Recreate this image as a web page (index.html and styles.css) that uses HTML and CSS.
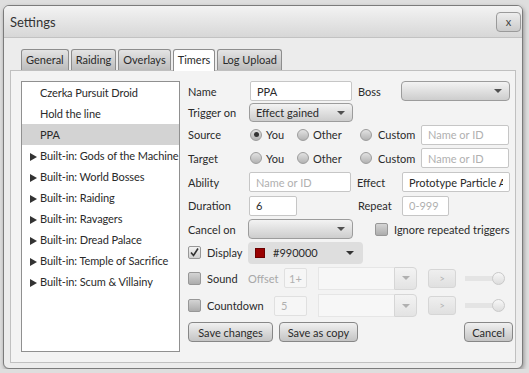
FILE: index.html
```html
<!DOCTYPE html>
<html lang="en">
<head>
    <meta charset="UTF-8">
    <meta name="viewport" content="width=device-width, initial-scale=1.0">
    <title>Settings</title>
    <link rel="stylesheet" href="styles.css">
</head>
<body>
<div class="window">
    <div class="titlebar">
        <span class="title">Settings</span>
        <button class="close">x</button>
    </div>
    <div class="content">
        <div class="tabs">
            <div class="tab">General</div>
            <div class="tab">Raiding</div>
            <div class="tab">Overlays</div>
            <div class="tab active">Timers</div>
            <div class="tab">Log Upload</div>
        </div>
        <div class="panel">
            <ul class="timer-list">
                <li>Czerka Pursuit Droid</li>
                <li>Hold the line</li>
                <li class="selected">PPA</li>
                <li class="group">Built-in: Gods of the Machine</li>
                <li class="group">Built-in: World Bosses</li>
                <li class="group">Built-in: Raiding</li>
                <li class="group">Built-in: Ravagers</li>
                <li class="group">Built-in: Dread Palace</li>
                <li class="group">Built-in: Temple of Sacrifice</li>
                <li class="group">Built-in: Scum &amp; Villainy</li>
            </ul>

            <div class="form">
                <div class="row row-name">
                    <span class="lbl">Name</span>
                    <input class="field name-field" type="text" value="PPA">
                    <span class="lbl-mid boss-lbl">Boss</span>
                    <div class="combo boss-combo"><span class="arrow"></span></div>
                </div>

                <div class="row row-trigger">
                    <span class="lbl">Trigger on</span>
                    <div class="combo trigger-combo">Effect gained<span class="arrow"></span></div>
                </div>

                <div class="row row-source">
                    <span class="lbl">Source</span>
                    <span class="radio-item you"><span class="radio on"></span>You</span>
                    <span class="radio-item other"><span class="radio"></span>Other</span>
                    <span class="radio-item custom"><span class="radio"></span>Custom</span>
                    <input class="field custom-field" type="text" placeholder="Name or ID">
                </div>

                <div class="row row-target">
                    <span class="lbl">Target</span>
                    <span class="radio-item you"><span class="radio"></span>You</span>
                    <span class="radio-item other"><span class="radio"></span>Other</span>
                    <span class="radio-item custom"><span class="radio"></span>Custom</span>
                    <input class="field custom-field" type="text" placeholder="Name or ID">
                </div>

                <div class="row row-ability">
                    <span class="lbl">Ability</span>
                    <input class="field ability-field" type="text" placeholder="Name or ID">
                    <span class="lbl-mid effect-lbl">Effect</span>
                    <input class="field effect-field" type="text" value="Prototype Particle Accelerator">
                </div>

                <div class="row row-duration">
                    <span class="lbl">Duration</span>
                    <input class="field duration-field" type="text" value="6">
                    <span class="lbl-mid repeat-lbl">Repeat</span>
                    <input class="field repeat-field" type="text" placeholder="0-999">
                </div>

                <div class="row row-cancel">
                    <span class="lbl">Cancel on</span>
                    <div class="combo cancel-combo"><span class="arrow"></span></div>
                    <span class="check ignore-check"></span>
                    <span class="check-text">Ignore repeated triggers</span>
                </div>

                <div class="row row-display">
                    <span class="check-label"><span class="check checked">
                        <svg width="11" height="11" viewBox="0 0 11 11"><path d="M2 5.5 L4.5 8.5 L9 1.5" fill="none" stroke="#333" stroke-width="1.6"/></svg>
                    </span>Display</span>
                    <div class="color-picker">
                        <span class="swatch"></span>
                        <span class="color-text">#990000</span>
                        <span class="arrow"></span>
                    </div>
                </div>

                <div class="row row-sound">
                    <span class="check-label"><span class="check"></span>Sound</span>
                    <span class="muted offset-lbl">Offset</span>
                    <input class="field offset-field" type="text" placeholder="1+" disabled>
                    <div class="combo-off"><span class="combo-off-text"></span><span class="combo-off-btn"><span class="arrow"></span></span></div>
                    <button class="play" disabled>&gt;</button>
                    <div class="slider"><span class="thumb"></span></div>
                </div>

                <div class="row row-countdown">
                    <span class="check-label countdown-label"><span class="check"></span>Countdown</span>
                    <input class="field countdown-field" type="text" placeholder="5" disabled>
                    <div class="combo-off"><span class="combo-off-text"></span><span class="combo-off-btn"><span class="arrow"></span></span></div>
                    <button class="play" disabled>&gt;</button>
                    <div class="slider"><span class="thumb"></span></div>
                </div>

                <div class="row row-buttons">
                    <button class="btn save-btn">Save changes</button>
                    <button class="btn copy-btn">Save as copy</button>
                    <button class="btn cancel-btn">Cancel</button>
                </div>
            </div>
        </div>
    </div>
</div>
</body>
</html>
```

FILE: styles.css
```css
body {
    margin: 0;
    background: #dedede;
    font-family: Lato, "Liberation Sans", sans-serif;
    font-size: 11px;
    color: #2a2a2a;
}
.window {
    margin: 5px 0 0 3px;
    width: 518px;
    height: 362px;
    border: 1px solid #7b7b7b;
    border-radius: 6px;
    background: #ececec;
    box-shadow: 1px 2px 4px rgba(0,0,0,0.35);
    overflow: hidden;
    display: flex;
    flex-direction: column;
}
.titlebar {
    height: 31px;
    border-bottom: 1px solid #c2c2c2;
    background: linear-gradient(#f3f3f3, #d7d7d7);
    display: flex;
    align-items: center;
    justify-content: space-between;
    padding: 0 1px 0 6px;
}
.title {
    font-size: 13px;
    color: #333;
}
.close {
    width: 25px;
    height: 20px;
    border: 1px solid #9a9a9a;
    border-radius: 4px;
    background: linear-gradient(#ededed, #cbcbcb);
    font-family: inherit;
    font-size: 11px;
    color: #444;
    padding: 0;
}
.content {
    flex: 1;
    padding: 11px 6px 5px;
    display: flex;
    flex-direction: column;
}
.tabs {
    display: flex;
    gap: 2px;
    margin-left: 11px;
    height: 21px;
}
.tab {
    border: 1px solid #8d8d8d;
    border-bottom: none;
    border-radius: 3px 3px 0 0;
    padding: 0 4px;
    line-height: 20px;
    background: linear-gradient(#e4e4e4, #bcbcbc);
}
.tab.active {
    background: #fff;
    height: 21px;
    margin-bottom: -1px;
    z-index: 1;
}
.panel {
    flex: 1;
    border: 1px solid #c0c0c0;
    background: #f3f3f3;
    display: flex;
    gap: 8px;
    padding: 10px 2px 10px 10px;
}
.timer-list {
    width: 159px;
    box-sizing: border-box;
    margin: 0;
    padding: 0;
    list-style: none;
    border: 1px solid #909090;
    background: #fff;
    letter-spacing: -0.1px;
}
.timer-list li {
    height: 21px;
    line-height: 21px;
    padding-left: 18px;
    white-space: nowrap;
    overflow: hidden;
}
.timer-list li.selected {
    background: #d3d3d3;
}
.timer-list li.group::before {
    content: "";
    display: inline-block;
    width: 0;
    height: 0;
    border-left: 7px solid #333;
    border-top: 4px solid transparent;
    border-bottom: 4px solid transparent;
    margin-left: -10px;
    margin-right: 3px;
    vertical-align: -1px;
}
.form {
    flex: 1;
    margin-top: -1px;
    display: flex;
    flex-direction: column;
}
.row {
    display: flex;
    align-items: center;
    flex-shrink: 0;
}
.row-name { height: 22px; }
.row-trigger { height: 21px; }
.row-source { height: 23px; }
.row-target { height: 24px; }
.row-ability { height: 24px; }
.row-duration { height: 23px; }
.row-cancel { height: 24px; }
.row-display { height: 23px; }
.row-sound { height: 28px; }
.row-countdown { height: 27px; }
.row-buttons { height: 26px; }

.lbl {
    width: 61px;
    flex-shrink: 0;
}
.lbl-mid {
    flex-shrink: 0;
    padding-left: 6px;
    box-sizing: border-box;
}
.boss-lbl { width: 49px; }
.effect-lbl { width: 51px; }
.repeat-lbl { width: 44px; margin-left: 61px; padding-left: 0; }

.field {
    box-sizing: border-box;
    height: 20px;
    border: 1px solid #c6c6c6;
    border-radius: 2px;
    background: #fff;
    font-family: inherit;
    font-size: 11px;
    color: #2a2a2a;
    padding: 0 6px;
    margin: 0;
    outline: none;
}
.field::placeholder { color: #b0b0b0; }
.field:disabled {
    background: #f6f6f6;
    border-color: #e0e0e0;
}
.name-field { width: 102px; margin-left: 1px; }
.custom-field { width: 88px; }
.ability-field { width: 102px; }
.effect-field { width: 108px; }
.duration-field { width: 48px; }
.repeat-field { width: 47px; }
.offset-field { width: 23px; padding: 0 4px; }
.countdown-field { width: 33px; }

.combo {
    box-sizing: border-box;
    height: 20px;
    border: 1px solid #9c9c9c;
    border-radius: 4px;
    background: linear-gradient(#f3f3f3, #cdcdcd);
    display: flex;
    align-items: center;
    padding-left: 6px;
}
.boss-combo { width: 109px; }
.trigger-combo { width: 104px; height: 19px; }
.cancel-combo { width: 105px; margin-left: -1px; }
.arrow {
    width: 0;
    height: 0;
    border-left: 4px solid transparent;
    border-right: 4px solid transparent;
    border-top: 4px solid #505050;
    margin-left: auto;
    margin-right: 7px;
}

.radio-item {
    display: flex;
    align-items: center;
    gap: 4px;
    flex-shrink: 0;
    box-sizing: border-box;
}
.radio-item.you { width: 49px; padding-left: 2px; margin-left: -1px; }
.radio-item.other { width: 63px; }
.radio-item.custom { width: 61px; gap: 6px; }
.radio {
    width: 12px;
    height: 12px;
    box-sizing: border-box;
    border-radius: 50%;
    border: 1px solid #9c9c9c;
    background: linear-gradient(#e2e2e2, #b3b3b3);
    display: flex;
    align-items: center;
    justify-content: center;
}
.radio.on::after {
    content: "";
    width: 5px;
    height: 5px;
    border-radius: 50%;
    background: #333;
}

.check {
    width: 13px;
    height: 13px;
    box-sizing: border-box;
    border: 1px solid #979797;
    border-radius: 2px;
    background: linear-gradient(#d4d4d4, #acacac);
    flex-shrink: 0;
    display: flex;
    align-items: center;
    justify-content: center;
}
.check.checked {
    background: linear-gradient(#f2f2f2, #d0d0d0);
}
.ignore-check { margin-left: 22px; }
.check-text { margin-left: 6px; white-space: nowrap; }
.check-label {
    display: flex;
    align-items: center;
    gap: 6px;
    width: 60px;
    flex-shrink: 0;
}
.countdown-label { width: 86px; }

.color-picker {
    width: 115px;
    height: 22px;
    box-sizing: border-box;
    border-radius: 4px;
    background: #dedede;
    display: flex;
    align-items: center;
    padding-left: 7px;
}
.swatch {
    width: 10px;
    height: 10px;
    box-sizing: border-box;
    border: 1px solid #6a0000;
    background: #990000;
}
.color-text { margin-left: 8px; }
.color-picker .arrow { margin-right: 9px; border-top-color: #333; }

.muted { color: #a8a8a8; }
.offset-lbl { width: 36px; flex-shrink: 0; }

.combo-off {
    display: flex;
    width: 99px;
    height: 23px;
    margin-left: 11px;
    flex-shrink: 0;
}
.combo-off-text {
    flex: 1;
    border: 1px solid #e6e6e6;
    border-right: none;
    background: #f7f7f7;
}
.combo-off-btn {
    width: 23px;
    box-sizing: border-box;
    border: 1px solid #d6d6d6;
    border-radius: 0 4px 4px 0;
    background: linear-gradient(#f3f3f3, #e3e3e3);
    display: flex;
    align-items: center;
}
.combo-off-btn .arrow {
    margin: 0 auto;
    border-top-color: #b0b0b0;
}
.play {
    width: 28px;
    height: 19px;
    margin-left: 11px;
    border: 1px solid #d6d6d6;
    border-radius: 3px;
    background: linear-gradient(#efefef, #e0e0e0);
    color: #b0b0b0;
    font-family: inherit;
    font-size: 9px;
    padding: 0;
}
.slider {
    width: 40px;
    height: 13px;
    margin-left: 9px;
    display: flex;
    align-items: center;
    justify-content: flex-end;
    background: linear-gradient(#e4e4e4, #e4e4e4) left center / 34px 5px no-repeat;
    border-radius: 3px;
}
.thumb {
    width: 13px;
    height: 13px;
    box-sizing: border-box;
    border-radius: 50%;
    border: 1px solid #c9c9c9;
    background: linear-gradient(#f7f7f7, #dddddd);
}

.btn {
    height: 20px;
    border: 1px solid #878787;
    border-radius: 4px;
    background: linear-gradient(#f0f0f0, #c4c4c4);
    font-family: inherit;
    font-size: 11px;
    color: #2a2a2a;
    padding: 0;
}
.save-btn { width: 85px; }
.copy-btn { width: 79px; margin-left: 6px; }
.cancel-btn { width: 49px; margin-left: auto; margin-right: 0; }
```
